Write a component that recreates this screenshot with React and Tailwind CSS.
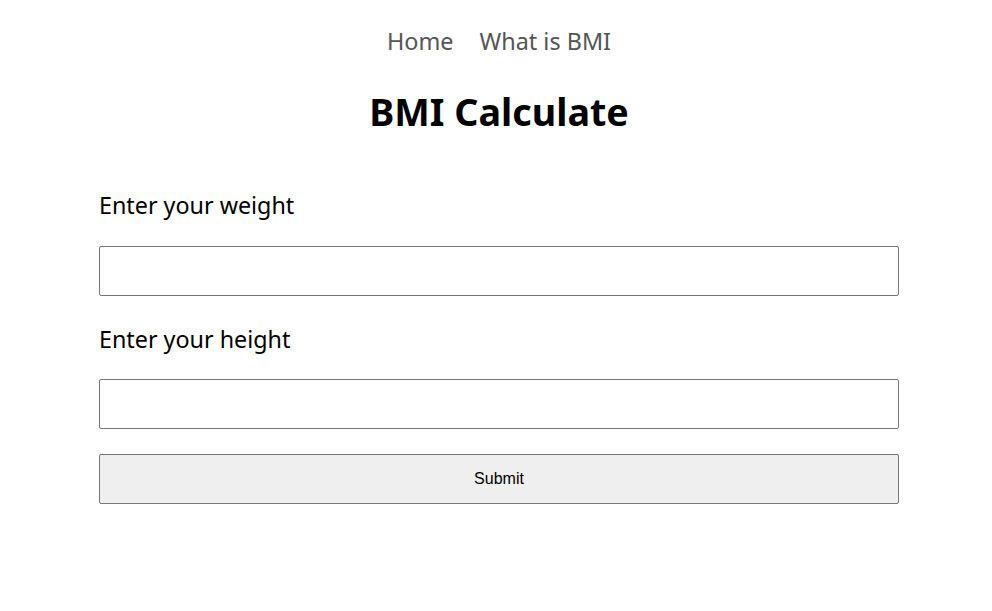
export default function App() {
  return (
    <div className="min-h-[611px] bg-white pl-[6px]" style={{ fontFamily: '"Noto Sans", "Open Sans", sans-serif' }}>
      <nav className="flex justify-center gap-[26px] pt-[23px] text-[23.4px] leading-[36px] text-[#555]">
        <a>Home</a>
        <a>What is BMI</a>
      </nav>
      <h1 className="mt-[29px] text-center text-[37.7px] font-bold leading-[48px] text-black">BMI Calculate</h1>
      <form className="mx-auto mt-[53px] flex w-[800px] flex-col">
        <label className="text-[23.3px] leading-[32px] text-black">Enter your weight</label>
        <input className="mt-[25px] h-[50px] w-full rounded-[2px] border border-[#767676] px-2" />
        <label className="mt-[27px] text-[23.3px] leading-[32px] text-black">Enter your height</label>
        <input className="mt-[24px] h-[50px] w-full rounded-[2px] border border-[#767676] px-2" />
        <button type="button" className="mt-[25px] h-[50px] w-full rounded-[2px] border border-[#767676] bg-[#efefef] text-[16px] text-black" style={{ fontFamily: '"Liberation Sans", Arial, sans-serif' }}>Submit</button>
      </form>
    </div>
  );
}
